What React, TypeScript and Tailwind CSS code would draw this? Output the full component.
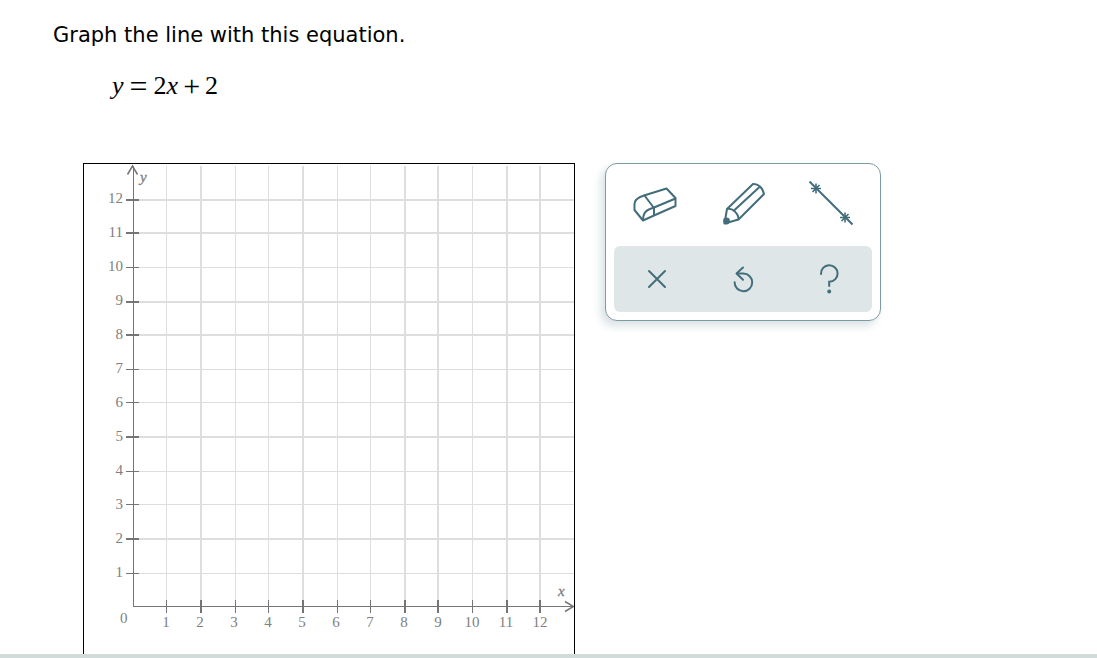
import React, { useState } from "react";

interface Tick {
  value: number;
  pos: number;
  heavy: boolean;
}

const xTicks: Tick[] = [
  { value: 1, pos: 82.5, heavy: false },
  { value: 2, pos: 117, heavy: true },
  { value: 3, pos: 151.5, heavy: false },
  { value: 4, pos: 184.5, heavy: false },
  { value: 5, pos: 219, heavy: true },
  { value: 6, pos: 253.5, heavy: false },
  { value: 7, pos: 286.5, heavy: false },
  { value: 8, pos: 321, heavy: true },
  { value: 9, pos: 354, heavy: true },
  { value: 10, pos: 388.5, heavy: false },
  { value: 11, pos: 423, heavy: true },
  { value: 12, pos: 456, heavy: true },
];

const yTicks: Tick[] = [
  { value: 1, pos: 409.5, heavy: false },
  { value: 2, pos: 375, heavy: true },
  { value: 3, pos: 340.5, heavy: false },
  { value: 4, pos: 307.5, heavy: false },
  { value: 5, pos: 273, heavy: true },
  { value: 6, pos: 238.5, heavy: false },
  { value: 7, pos: 205.5, heavy: false },
  { value: 8, pos: 171, heavy: true },
  { value: 9, pos: 138, heavy: true },
  { value: 10, pos: 103.5, heavy: false },
  { value: 11, pos: 69, heavy: true },
  { value: 12, pos: 36, heavy: true },
];

// distance between two axis labels
const STEP = 34;

const CoordinatePlane: React.FC = () => (
  <svg
    viewBox="0 0 490 490"
    width="490"
    height="490"
    className="block"
    role="img"
    aria-label="Coordinate plane"
  >
    {/* grid */}
    <g stroke="#dedede">
      {xTicks.map((t) => (
        <line key={t.value} x1={t.pos} x2={t.pos} y1="2" y2="442" strokeWidth={t.heavy ? 2 : 1} />
      ))}
      {yTicks.map((t) => (
        <line key={t.value} x1="50" x2="490" y1={t.pos} y2={t.pos} strokeWidth={t.heavy ? 2 : 1} />
      ))}
    </g>

    {/* axes and ticks */}
    <g stroke="#757575" fill="none">
      <path d="M49.5 2V443M49 442.5H489" />
      <path d="M43.5 10.5L48.5 2L53.5 10.5M481 437.5L489.5 442.5L481 447.5" strokeWidth="1.5" />
      {xTicks.map((t) => (
        <line key={t.value} x1={t.pos} x2={t.pos} y1="436" y2="449" strokeWidth={t.heavy ? 2 : 1} />
      ))}
      {yTicks.map((t) => (
        <line key={t.value} x1="42" x2="55" y1={t.pos} y2={t.pos} strokeWidth={t.heavy ? 2 : 1} />
      ))}
    </g>

    <g fill="#808080" fontSize="15" className="font-['Liberation_Serif',serif]">
      {xTicks.map((t) => (
        <text key={t.value} x={48 + t.value * STEP} y="463" textAnchor="middle">
          {t.value}
        </text>
      ))}
      {yTicks.map((t) => (
        <text key={t.value} x="39" y={447 - t.value * STEP} textAnchor="end">
          {t.value}
        </text>
      ))}
      <text x="36" y="459">0</text>
      <text x="56" y="18" fontStyle="italic" stroke="#808080" strokeWidth="0.3">y</text>
      <text x="474" y="432" fontStyle="italic" stroke="#808080" strokeWidth="0.3">x</text>
    </g>
  </svg>
);

const EraserIcon = () => (
  <svg viewBox="0 0 48 48" className="size-12" fill="none" stroke="currentColor" strokeWidth="2" strokeLinejoin="round">
    <path d="M1.5 24C1.5 20 5 17.5 11 15.5L33.5 8.5L42.5 18V26L21 35.5L10 40.5L1.5 30Z" />
    <path d="M11.5 15.5L21 28V35.5M10 40.5C10 32 14 29.5 21 27.5L42.5 18.5" />
  </svg>
);

const PencilIcon = () => (
  <svg viewBox="0 0 48 48" className="size-12" fill="none" stroke="currentColor" strokeWidth="2" strokeLinejoin="round">
    <path d="M8 29L34 4C39 3.5 44 8 45 14L19.5 39.5L5.5 43.5Z" />
    <path d="M8 29C13.5 28 19.5 33 19.5 39.5M15 30.5L40.5 7" />
    <circle cx="7.5" cy="41" r="2.4" fill="currentColor" />
  </svg>
);

const LineIcon = () => (
  <svg viewBox="0 0 48 48" className="size-12" fill="none" stroke="currentColor" strokeWidth="2">
    <path d="M4.5 1.5L47.5 44.5" />
    <path d="M6 8.5H16M11 3.5V13.5M7.5 12L14.5 5M35 37.5H45M40 32.5V42.5M36.5 41L43.5 34" strokeWidth="1.6" />
  </svg>
);

const ClearIcon = () => (
  <svg viewBox="0 0 24 24" className="size-6" fill="none" stroke="currentColor" strokeWidth="2" strokeLinecap="round">
    <path d="M4 4L20 20M20 4L4 20" />
  </svg>
);

const UndoIcon = () => (
  <svg viewBox="0 0 24 24" className="size-6 overflow-visible" fill="none" stroke="currentColor" strokeWidth="2" strokeLinecap="round" strokeLinejoin="round">
    <path d="M3.6 15.2A8.8 8.8 0 1 0 12.4 6.6H6" />
    <path d="M12 0.5L5.5 6.6L12 12.7" />
  </svg>
);

const HelpIcon = () => (
  <svg viewBox="0 0 24 32" className="h-8 w-6" fill="none" stroke="currentColor" strokeWidth="2" strokeLinecap="round">
    <path d="M4 11A8.3 8.3 0 1 1 12.2 18.8V23" />
    <circle cx="12.2" cy="28.4" r="1" fill="currentColor" />
  </svg>
);

const drawingTools = [
  { id: "eraser", label: "Eraser", Icon: EraserIcon },
  { id: "pencil", label: "Pencil", Icon: PencilIcon },
  { id: "line", label: "Line", Icon: LineIcon },
];

const actions = [
  { id: "clear", label: "Clear", Icon: ClearIcon },
  { id: "undo", label: "Undo", Icon: UndoIcon },
  { id: "help", label: "Help", Icon: HelpIcon },
];

const Toolbox: React.FC = () => {
  const [tool, setTool] = useState("");

  return (
    <div className="w-[276px] shrink-0 rounded-xl border border-[#7c9ba1] bg-white p-2 text-[#426e7b] shadow-[-4px_5px_8px_rgba(66,110,123,0.2)]">
      <div className="mb-[10px] grid h-16 grid-cols-3">
        {drawingTools.map(({ id, label, Icon }) => (
          <button
            key={id}
            type="button"
            aria-label={label}
            aria-pressed={tool === id}
            className="flex items-center justify-center"
            onClick={() => setTool(id)}
          >
            <Icon />
          </button>
        ))}
      </div>
      <div className="grid h-[66px] grid-cols-3 rounded-md bg-[#dfe6e7]">
        {actions.map(({ id, label, Icon }) => (
          <button
            key={id}
            type="button"
            aria-label={label}
            className="flex items-center justify-center"
            onClick={() => setTool("")}
          >
            <Icon />
          </button>
        ))}
      </div>
    </div>
  );
};

const App: React.FC = () => {
  return (
    <div className="flex h-screen flex-col bg-white">
      <main className="min-h-0 flex-1 overflow-hidden pt-[21px] pl-[53px]">
        <h1 className="font-['DejaVu_Sans',sans-serif] text-[21px] leading-7 text-black">
          Graph the line with this equation.
        </h1>
        <p className="mt-[23px] flex h-7 items-center gap-[5px] pl-[59px] font-['Liberation_Serif',serif] text-[26px] leading-7 text-black">
          <i>y</i>
          <span className="px-px text-[32px]">=</span>
          <span>
            2<i>x</i>
          </span>
          <span className="text-[30px]">+</span>
          <span>2</span>
        </p>
        <div className="mt-[63px] flex items-start gap-[30px] pl-[30px]">
          <div className="shrink-0 border border-black">
            <CoordinatePlane />
          </div>
          <Toolbox />
        </div>
      </main>
      <footer className="h-1 shrink-0 bg-[#d1dbd9]" />
    </div>
  );
};

export default App;
